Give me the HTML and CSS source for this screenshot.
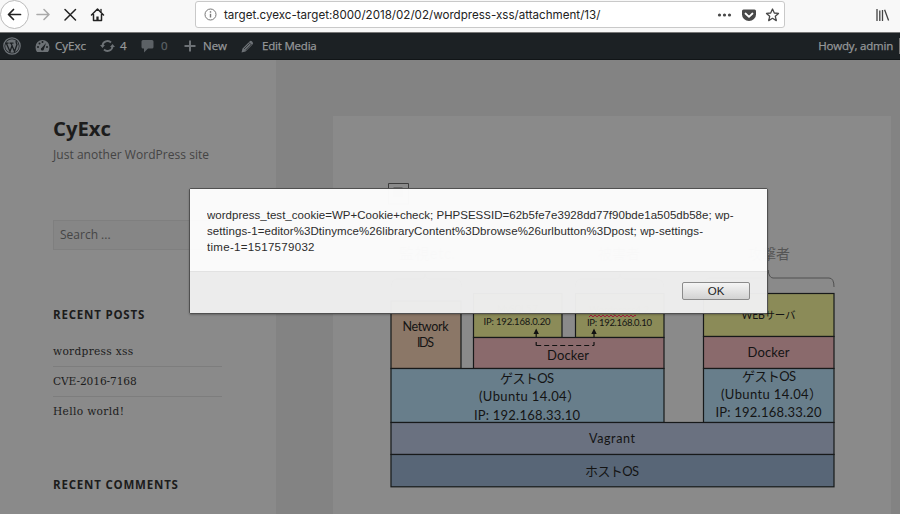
FILE: index.html
```html
<!DOCTYPE html>
<html lang="en">
<head>
<meta charset="utf-8">
<title>CyExc</title>
<link rel="stylesheet" href="styles.css">
</head>
<body>
<div class="window">
  <header class="toolbar">
    <svg class="nav-icons" width="110" height="32" viewBox="0 0 110 32" fill="none" stroke-linecap="round" stroke-linejoin="round">
      <circle cx="14.5" cy="14.5" r="14" fill="#fff" stroke="#bbb"/>
      <path d="M20.5 14.5H9M13.5 9.5l-5 5 5 5" stroke="#222" stroke-width="1.7"/>
      <path d="M37 14.5h11.5M44 9.5l5 5-5 5" stroke="#aaa" stroke-width="1.6"/>
      <path d="M65 9.500l10.500 10.500M75.500 9.500L65 20" stroke="#222" stroke-width="1.500"/>
      <path d="M91.500 15L97.500 9l6 6M93.500 14.500v6h8v-6" stroke="#222" stroke-width="1.500"/>
      <path d="M97.500 16.500v3.500" stroke="#222" stroke-width="2.300" stroke-linecap="butt"/>
      <path d="M101 9.500v2" stroke="#222" stroke-width="1.300"/>
    </svg>
    <div class="urlbar">
      <svg width="13" height="13" viewBox="0 0 13 13" fill="none" stroke="#777"><circle cx="6.500" cy="6.500" r="5.500"/><path d="M6.500 5.800v3.700" stroke-width="1.400"/><path d="M6.500 3.200v1.500" stroke-width="1.400"/></svg>
      <span class="url">target.cyexc-target:8000/2018/02/02/wordpress-xss/attachment/13/</span>
      <svg class="url-actions" width="64" height="16" viewBox="0 0 64 16">
        <g fill="#484848"><circle cx="3.500" cy="8" r="1.600"/><circle cx="8.500" cy="8" r="1.600"/><circle cx="13.500" cy="8" r="1.600"/>
        <path d="M27.500 2.500h11q1.500 0 1.500 1.500v3.500a7 6.500 0 0 1-14 0V4q0-1.500 1.500-1.500z"/></g>
        <path d="M29.500 6.500l3.500 3.300 3.500-3.300" fill="none" stroke="#fff" stroke-width="1.800" stroke-linecap="round" stroke-linejoin="round"/>
        <path d="M56.500 2l1.800 4 4.200.4-3.200 2.900 1 4.300-3.800-2.300-3.800 2.300 1-4.300-3.200-2.900 4.200-.4z" fill="none" stroke="#484848" stroke-width="1.300" stroke-linejoin="round"/>
      </svg>
    </div>
    <svg class="library" width="14" height="12" viewBox="0 0 14 12" fill="none" stroke="#444" stroke-width="1.300"><path d="M1 0v12M3.800 1.500V12M6.500 1v11M8.600 .8l4 10.700"/></svg>
  </header>

  <nav class="adminbar">
    <svg class="wp" width="18" height="18" viewBox="0 0 18 18" fill="none" stroke="#70757a"><circle cx="9" cy="9" r="8.200" stroke-width="1.200"/><circle cx="9" cy="9" r="6.800" fill="#6b7074" stroke="none"/><path d="M3.300 6.200L7 14.500 9.300 8M8 6.200l3.500 8.300L14 7.500Q12.500 4.500 13.500 3.700M2.800 6.100h2.800M6.500 6.100h4" stroke="#1c2023" stroke-width="1.300"/></svg>
    <svg class="dash" width="15" height="14" viewBox="0 0 15 14"><path d="M.5 8A7 7 0 0 1 14.500 8q0 2.800-1.500 5H2Q.5 10.800.5 8z" fill="#6c7175"/><g fill="#1c2023"><circle cx="3" cy="8" r="1"/><circle cx="4.500" cy="4.500" r="1"/><circle cx="7.500" cy="3" r="1"/><circle cx="12" cy="8" r="1"/><path d="M11 4L8.800 10.500A1.500 1.500 0 1 1 6.800 8.700z"/></g></svg>
    <span class="bar-text site">CyExc</span>
    <svg class="update" width="15" height="14" viewBox="0 0 15 14" fill="none" stroke="#6c7175" stroke-width="1.900"><path d="M2.500 6.500A5 5 0 0 1 11 3.500M12.500 7.500A5 5 0 0 1 4 10.500"/><path d="M0 6h5L2.500 9zM10 8h5L12.500 5z" fill="#6c7175" stroke="none"/></svg>
    <span class="bar-text updates">4</span>
    <svg class="comment" width="13" height="14" viewBox="0 0 13 14"><path d="M2 1h9q1.500 0 1.500 1.500V8q0 1.500-1.500 1.500H7L3 13.500v-4H2Q.5 9.500.5 8V2.500Q.5 1 2 1z" fill="#5c6165"/></svg>
    <span class="bar-text comments">0</span>
    <svg class="plus" width="12" height="12" viewBox="0 0 12 12"><path d="M6 .5v11M.5 6h11" stroke="#6c7175" stroke-width="2"/></svg>
    <span class="bar-text new">New</span>
    <svg class="pencil" width="13" height="13" viewBox="0 0 13 13"><path d="M.5 12.500L1.500 8.500 8.500 1.500q1.300-1.300 2.600 0l.4.4q1.300 1.300 0 2.600L4.500 11.500z" fill="#6c7175"/><path d="M3 9l5.500-5.500M4.500 10.300L10 4.800M8 2.500l2.700 2.700" stroke="#1c2023" stroke-width=".7"/></svg>
    <span class="bar-text edit">Edit Media</span>
    <span class="bar-text howdy">Howdy, admin</span>
    <span class="avatar"></span>
  </nav>

  <div class="page">
    <aside class="sidebar">
      <h1>CyExc</h1>
      <p class="tagline">Just another WordPress site</p>
      <div class="search">Search ...</div>
      <h2>RECENT POSTS</h2>
      <ul>
        <li><span class="p1">wordpress xss</span></li>
        <li><span class="p2">CVE-2016-7168</span></li>
        <li><span class="p3">Hello world!</span></li>
      </ul>
      <h2 class="recent-comments">RECENT COMMENTS</h2>
    </aside>
    <main class="content">
      <article class="entry">
        <svg class="figure" width="558" height="398" viewBox="333 116 558 398">
          <g fill="none" stroke="#3c3c3c"><path d="M388.500 204v-20.500h20V204z"/><rect x="394" y="187.500" width="8" height="9" fill="#777" stroke="#666"/></g>
          <g class="faint">
            <text x="399" y="259" textLength="56" font-size="15">監視etc.</text>
            <text x="598" y="259" textLength="42" font-size="14">被害者</text>
            <text x="748" y="259" textLength="42" font-size="14">攻撃者</text>
          </g>
          <g fill="none" stroke="#505050"><path d="M391 287q1-8 5-8h25q4 0 4-5 0 5 5 5h27q4 0 5 8M575 287q1-8 5-8h36q4 0 4-5 0 5 5 5h32q6 0 7 8M704 287q1-9 5-9h54q5 0 5-8 1 8 5 8h56q5 0 5 9"/></g>
          <g stroke="#17191a" stroke-width="1.200">
            <rect x="391" y="301" width="70" height="67.500" fill="#8b7767"/>
            <rect x="473.500" y="293.500" width="88.500" height="44" fill="#8b8b58"/>
            <rect x="575.500" y="293.500" width="88.500" height="44" fill="#8b8b58"/>
            <rect x="703.500" y="293.500" width="130.500" height="43" fill="#8b8b58"/>
            <rect x="473.500" y="337.500" width="190.500" height="31" fill="#8a6a6c"/>
            <rect x="703.500" y="336.500" width="130.500" height="32" fill="#8a6a6c"/>
            <rect x="391" y="368.500" width="273" height="54" fill="#687e8b"/>
            <rect x="703.500" y="368.500" width="130.500" height="54" fill="#687e8b"/>
            <rect x="391" y="422.500" width="443" height="32" fill="#6a7180"/>
            <rect x="391" y="454.500" width="443" height="32.300" fill="#586677"/>
          </g>
          <path d="M536.200 345.500V342M536.200 345.500H594M594 345.500V342" fill="none" stroke="#111" stroke-width="1.200" stroke-dasharray="5 3"/>
          <path d="M536.200 337v-4M594 337v-4" stroke="#111" stroke-width="1.200"/>
          <path d="M533.500 334l2.700-5.500 2.700 5.500zM591.300 334l2.700-5.500 2.700 5.500z" fill="#111"/>
          <path d="M589 317l2-2 2 2 2-2 2 2 2-2 2 2 2-2 2 2 2-2 2 2 2-2 2 2 2-2 2 2 2-2 2 2 2-2 2 2 2-2 2 2 2-2 2 2 2-2 1 1" fill="none" stroke="#a51f3c"/>
          <g class="labels">
            <text x="402.500" y="330.500" textLength="46" font-size="12.500">Network</text>
            <text x="417" y="346.500" textLength="17" font-size="12.500">IDS</text>
            <text class="hidden-label" x="497" y="312" textLength="41" font-size="9.500">MySQL5.7</text>
            <text x="483.500" y="324.500" textLength="67" font-size="9.500">IP: 192.168.0.20</text>
            <text class="hidden-label" x="589" y="313" textLength="60" font-size="9.500">Wordpress4.2</text>
            <text x="587" y="326" textLength="65" font-size="9.500">IP: 192.168.0.10</text>
            <text x="741.500" y="318.500" textLength="54" font-size="10.500">WEBサーバ</text>
            <text x="547" y="360" textLength="42" font-size="13">Docker</text>
            <text x="747.500" y="356.500" textLength="42" font-size="13">Docker</text>
            <text x="500" y="383" textLength="54" font-size="13">ゲストOS</text>
            <text x="479" y="401" textLength="101" font-size="13">(Ubuntu 14.04）</text>
            <text x="474" y="419.500" textLength="106" font-size="13">IP: 192.168.33.10</text>
            <text x="742" y="381" textLength="54" font-size="13">ゲストOS</text>
            <text x="721" y="398.500" textLength="101" font-size="13">(Ubuntu 14.04）</text>
            <text x="715.500" y="417" textLength="106" font-size="13">IP: 192.168.33.20</text>
            <text x="589" y="443" textLength="46" font-size="12.500">Vagrant</text>
            <text x="585" y="476" textLength="54" font-size="13">ホストOS</text>
          </g>
        </svg>
      </article>
    </main>
  </div>
  <div class="dialog" role="alertdialog">
    <div class="message">
      <svg width="540" height="52" viewBox="0 0 540 52">
        <text x="0" y="12" textLength="526.500">wordpress_test_cookie=WP+Cookie+check; PHPSESSID=62b5fe7e3928dd77f90bde1a505db58e; wp-</text>
        <text x="0" y="28" textLength="496">settings-1=editor%3Dtinymce%26libraryContent%3Dbrowse%26urlbutton%3Dpost; wp-settings-</text>
        <text x="0" y="44" textLength="107.500">time-1=1517579032</text>
      </svg>
    </div>
    <div class="actions"><button>OK</button></div>
  </div>
</div>
</body>
</html>
```
FILE: styles.css
```css
* { box-sizing: border-box; }
body { margin: 0; }
svg { display: block; flex: none; }
.window { position: relative; width: 900px; height: 514px; overflow: hidden; display: flex; flex-direction: column; background: #838383; font-family: "Open Sans", sans-serif; }
.toolbar { height: 33px; flex: none; display: flex; align-items: flex-start; background: #f8f8f8; border-bottom: 1px solid #777; }
.urlbar { margin: 1px 0 0 85px; width: 590px; height: 27px; border: 1px solid #c9c9c9; border-radius: 3px; background: #fff; display: flex; align-items: center; padding: 0 4px 0 8px; }
.url { margin-left: 7px; font: 11.6px Inter, sans-serif; color: #222; white-space: nowrap; letter-spacing: 0; }
.url-actions { margin-left: auto; }
.library { margin: 9px 0 0 91px; }
.adminbar { height: 27px; flex: none; display: flex; align-items: center; background: #1c2124; border-bottom: 1px solid #111517; padding-left: 3px; }
.bar-text { font-size: 11.5px; line-height: 26px; color: #969899; white-space: nowrap; -webkit-text-stroke: .25px; }
.dash { margin-left: 14px; }
.site { margin-left: 5px; width: 45px; }
.updates { margin-left: 5px; width: 21px; }
.comments { margin-left: 7px; width: 22px; color: #5e6367; }
.plus { margin-left: 1px; }
.new { margin-left: 7px; width: 38px; }
.edit { margin-left: 8px; letter-spacing: -.2px; }
.howdy { margin-left: auto; letter-spacing: -.2px; }
.avatar { margin-left: 6px; width: 1px; height: 16px; background: #777; }
.page { flex: 1; display: flex; min-height: 0; }
.sidebar { width: 276px; flex: none; background: #8a8a8a; padding: 55px 54px 0 53px; color: #1c1c1c; }
h1 { margin: 0; font-size: 20.3px; line-height: 27px; font-weight: 700; }
.tagline { margin: 3px 0 0; font-size: 12px; line-height: 20px; color: #444; white-space: nowrap; letter-spacing: .04px; }
.search { margin-top: 55px; width: 169px; height: 30px; border: 1px solid #7f7f7f; background: #868686; padding-left: 6px; font-size: 12px; line-height: 28px; color: #454545; }
h2 { margin: 55px 0 0; font-size: 11.5px; line-height: 20px; font-weight: 700; letter-spacing: .8px; white-space: nowrap; }
ul { list-style: none; margin: 11px 0 0; padding: 0; }
li { height: 30px; line-height: 30px; font-family: "DejaVu Serif Condensed", "DejaVu Serif", serif; font-stretch: condensed; font-size: 11.8px; }
li + li { border-top: 1px solid #7d7d7d; line-height: 28px; }
.p1 { letter-spacing: .3px; }
.p2 { letter-spacing: -.1px; }
.p3 { letter-spacing: .35px; }
.recent-comments { margin-top: 49px; }
.content { flex: 1; padding: 56px 9px 0 57px; }
.entry { height: 398px; background: #8a8a8a; }
.figure text { font-family: Lato, "Noto Sans CJK JP", sans-serif; }
.faint { fill: #555; }
.labels { fill: #141414; }
.labels .hidden-label { fill: #505040; }
.dialog { position: absolute; left: 189px; top: 188px; width: 579px; height: 126px; border: 1px solid #505050; border-radius: 2px; display: flex; flex-direction: column; box-shadow: 0 1px 2px rgba(0,0,0,.25); }
.message { height: 83px; padding: 18px 0 0 17px; background: rgba(252,252,252,.98); border-bottom: 1px solid #e2e2e2; }
.message text { font: 11.5px "Liberation Sans", sans-serif; fill: #2c2c2c; }
.actions { flex: 1; display: flex; justify-content: flex-end; padding: 10px 17px 0 0; background: rgba(239,239,239,.97); }
button { width: 68px; height: 18px; border: 1px solid #8b8b8b; border-radius: 2px; background: linear-gradient(#f5f5f5, #d2d2d2); padding: 0; font: 11.5px/15px "Liberation Sans", sans-serif; color: #222; }
```
